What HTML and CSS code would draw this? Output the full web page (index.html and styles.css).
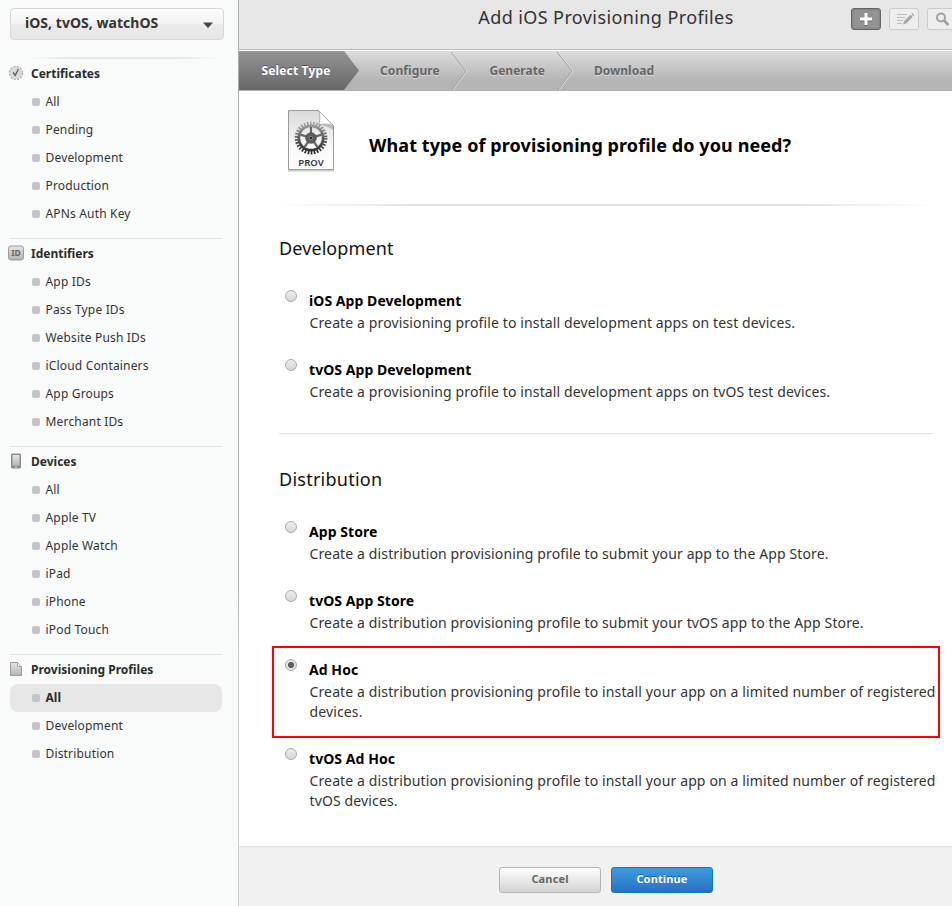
FILE: index.html
```
<!DOCTYPE html>
<html lang="en">
<head>
<meta charset="utf-8">
<title>Add iOS Provisioning Profiles</title>
<link rel="stylesheet" href="styles.css">
</head>
<body>
<aside class="sidebar">
  <div class="platform"><span>iOS, tvOS, watchOS</span><svg width="10" height="6" viewBox="0 0 10 6"><path d="M0 .5h10L5 6z" fill="#444"/></svg></div>
  <div class="fade-rule"></div>
  <nav>
    <section class="group first">
      <h3><svg class="icon" viewBox="0 0 16 16"><circle cx="8" cy="8" r="6.500" fill="#dcdcdc" stroke="#b0b0b0" stroke-width="1.500" stroke-dasharray="2 1.400"/><circle cx="8" cy="8" r="5.800" fill="#dadada"/><path d="M5 7.500l2.200 2.800L10.500 4" fill="none" stroke="#666" stroke-width="1.500"/></svg>Certificates</h3>
      <ul><li>All</li><li>Pending</li><li>Development</li><li>Production</li><li>APNs Auth Key</li></ul>
    </section>
    <section class="group">
      <h3><svg class="icon" viewBox="0 0 16 16"><defs><linearGradient id="g1" x2="0" y2="1"><stop stop-color="#e6e6e6"/><stop offset="1" stop-color="#b4b4b6"/></linearGradient></defs><rect x=".5" y="1" width="15" height="14" rx="2.500" fill="url(#g1)" stroke="#98989b"/><text class="id-label" x="8" y="11.200">ID</text></svg>Identifiers</h3>
      <ul><li>App IDs</li><li>Pass Type IDs</li><li>Website Push IDs</li><li>iCloud Containers</li><li>App Groups</li><li>Merchant IDs</li></ul>
    </section>
    <section class="group">
      <h3><svg class="icon" viewBox="0 0 16 16"><rect x="3" y=".5" width="10" height="15" rx="1.500" fill="#8c8c8f"/><rect x="4.500" y="2" width="7" height="10.700" fill="url(#g1)"/><path d="M7 14.200h2" stroke="#ddd"/></svg>Devices</h3>
      <ul><li>All</li><li>Apple TV</li><li>Apple Watch</li><li>iPad</li><li>iPhone</li><li>iPod Touch</li></ul>
    </section>
    <section class="group">
      <h3><svg class="icon" viewBox="0 0 16 16"><path d="M2.500 1.500h7l4 4v9h-11z" fill="url(#g1)" stroke="#99999c"/><path d="M9.500 1.500v4h4" fill="#f4f4f4" stroke="#99999c" stroke-width=".8"/></svg>Provisioning Profiles</h3>
      <ul><li class="selected">All</li><li>Development</li><li>Distribution</li></ul>
    </section>
  </nav>
</aside>
<main>
  <header class="topbar">
    <h1>Add iOS Provisioning Profiles</h1>
    <div class="tools">
      <button class="tool active" aria-label="Add"><svg width="28" height="20" viewBox="0 0 28 20"><path d="M14 5v12M8 11h12" stroke="#666" stroke-width="3"/><path d="M14 4v12M8 10h12" stroke="#fff" stroke-width="3"/></svg></button>
      <button class="tool" aria-label="Edit"><svg width="28" height="20" viewBox="0 0 28 20"><path d="M7 5.500h10M7 8.500h8M7 11.500h6M7 14.500h5" stroke="#bdbdbd"/><path d="M13 15.500l1-3.300 6.500-6.500 2.200 2.200-6.500 6.500zM21.200 5l1-1 2.200 2.200-1 1z" fill="#a8a8a8"/></svg></button>
      <button class="tool" aria-label="Search"><svg width="28" height="20" viewBox="0 0 28 20"><circle cx="13" cy="8.500" r="4" fill="none" stroke="#a0a0a0" stroke-width="2"/><path d="M16 11.500l4.500 4.500" stroke="#a0a0a0" stroke-width="2.600"/></svg></button>
    </div>
  </header>
  <ol class="steps">
    <li class="current"><svg class="arrow" width="17" height="39" viewBox="0 0 17 39"><defs><linearGradient id="g2" x2="0" y2="1"><stop stop-color="#949494"/><stop offset="1" stop-color="#686868"/></linearGradient></defs><path d="M0 0h1L16 19.500 1 39H0z" fill="url(#g2)"/></svg>Select Type</li>
    <li class="configure">Configure<svg class="arrow" width="17" height="39" viewBox="0 0 17 39"><path d="M0 1l15 19L1 39" fill="none" stroke="#e2e2e2" transform="translate(1)"/><path d="M0 1l15 19L1 39" fill="none" stroke="#a0a0a0"/></svg></li>
    <li class="generate">Generate<svg class="arrow" width="17" height="39" viewBox="0 0 17 39"><path d="M0 1l15 19L1 39" fill="none" stroke="#e2e2e2" transform="translate(1)"/><path d="M0 1l15 19L1 39" fill="none" stroke="#a0a0a0"/></svg></li>
    <li class="download">Download</li>
  </ol>
  <form class="content">
    <div class="intro">
      <svg width="50" height="64" viewBox="0 0 50 64">
        <defs><linearGradient id="g3" x2="0" y2="1"><stop stop-color="#dadada"/><stop offset=".6" stop-color="#f8f8f8"/><stop offset="1" stop-color="#fff"/></linearGradient><linearGradient id="g4" gradientUnits="userSpaceOnUse" x1="0" y1="13" x2="0" y2="46"><stop stop-color="#aaa"/><stop offset=".5" stop-color="#5c5c5c"/><stop offset="1" stop-color="#222"/></linearGradient></defs>
        <path d="M1 61.500h46" stroke="#ccc" stroke-width="2"/>
        <path d="M1.500 1.500h30L46.500 17v43.500h-45z" fill="url(#g3)" stroke="#9a9a9a"/>
        <path d="M31.500 1.500c2 5 1.500 11 0 14.500 5-1.500 11-1 15 1z" fill="#fff" stroke="#aaa"/>
        <path d="M32 16c5-1.500 11-1 14 1v4c-4-3-8-4-14-5z" fill="#bbb"/>
        <circle cx="24" cy="29" r="14.700" fill="none" stroke="url(#g4)" stroke-width="3.400" stroke-dasharray="1.700 1.379"/>
        <circle cx="24" cy="29" r="12.200" fill="none" stroke="url(#g4)" stroke-width="2.800"/>
        <path d="M24 29V18M24 29l10.500-3.400M24 29l6.500 9M24 29l-6.500 9M24 29l-10.500-3.400" stroke="#666" stroke-width="2.200"/>
        <circle cx="24" cy="29" r="5.800" fill="#5c5c5c"/><circle cx="24" cy="29" r="1.700" fill="#222" stroke="#999" stroke-width=".8"/>
        <text class="prov-label" x="24" y="56.500">PROV</text>
      </svg>
      <h2>What type of provisioning profile do you need?</h2>
    </div>
    <section class="kind">
      <h4>Development</h4>
      <label class="option"><input type="radio" name="type"><b>iOS App Development</b><span>Create a provisioning profile to install development apps on test devices.</span></label>
      <label class="option"><input type="radio" name="type"><b>tvOS App Development</b><span>Create a provisioning profile to install development apps on tvOS test devices.</span></label>
    </section>
    <section class="kind distribution">
      <h4>Distribution</h4>
      <label class="option"><input type="radio" name="type"><b>App Store</b><span>Create a distribution provisioning profile to submit your app to the App Store.</span></label>
      <label class="option"><input type="radio" name="type"><b>tvOS App Store</b><span>Create a distribution provisioning profile to submit your tvOS app to the App Store.</span></label>
      <label class="option marked"><input type="radio" name="type" checked><b>Ad Hoc</b><span>Create a distribution provisioning profile to install your app on a limited number of registered devices.</span></label>
      <label class="option"><input type="radio" name="type"><b>tvOS Ad Hoc</b><span>Create a distribution provisioning profile to install your app on a limited number of registered tvOS devices.</span></label>
    </section>
  </form>
  <footer><button class="btn">Cancel</button><button class="btn primary">Continue</button></footer>
</main>
</body>
</html>
```
FILE: styles.css
```
*, *::before { box-sizing: border-box; }
body { margin: 0; width: 952px; height: 906px; overflow: hidden; display: flex; background: #fff; font: 14px "Noto Sans", sans-serif; color: #333; }
h1, h2, h3, h4, ul, ol { margin: 0; padding: 0; list-style: none; font-weight: 400; }
button { font-family: inherit; padding: 0; }

.sidebar { flex: none; width: 239px; padding: 8px 16px 0 10px; background: #f9fbfa; border-right: 1px solid; border-image: linear-gradient(#aaa 65%, #d0d0d0 72%) 1; }
.platform { width: 214px; height: 32px; display: flex; align-items: center; justify-content: space-between; padding: 0 10px 3px 14px; border: 1px solid #d6d6d6; border-radius: 4px; background: linear-gradient(#fcfcfc, #f3f3f3 50%, #ebebeb 50%, #e6e6e6); font-size: 14px; font-weight: 700; letter-spacing: .04px; }
.platform svg { margin-top: 4px; }
.fade-rule { height: 2px; margin: 17px 0 0 20px; width: 190px; background: linear-gradient(90deg, transparent, #e6e8e7 20%, #e6e8e7 80%, transparent); }
.group { width: 212px; border-top: 1px solid #e2e4e3; padding: 1px 0 10px; }
.group.first { border-top: 0; padding-top: 1px; }
.group h3 { height: 28px; display: flex; align-items: center; margin-left: -2px; padding-bottom: 2px; font-size: 12px; font-weight: 700; color: #2b2b2b; }
.icon { width: 16px; height: 16px; margin-right: 7px; }
.id-label { font: 700 8.500px "Noto Sans", sans-serif; fill: #666; text-anchor: middle; }
.group li { height: 28px; display: flex; align-items: center; padding: 0 0 2px 22px; font-size: 12px; letter-spacing: .17px; border-radius: 8px; }
.group li::before { content: ""; width: 8px; height: 8px; margin: 1px 5.500px 0 0; border-radius: 2px; background: #c4c4c8; }
.group li.selected { background: #e6e6e6; font-weight: 700; color: #2b2b2b; letter-spacing: 0; }

main { flex: 1; min-width: 0; display: flex; flex-direction: column; overflow: hidden; }
.topbar { height: 51px; flex: none; position: relative; background: #e6e6e6; border-bottom: 1px solid #fff; box-shadow: inset 0 -1px #bdbdbd; }
h1 { width: 734px; padding-top: 5px; line-height: 25px; font-size: 18px; letter-spacing: .4px; text-align: center; }
.tools { position: absolute; left: 612px; top: 8px; display: flex; gap: 8px; }
.tool { flex: none; width: 30px; height: 22px; border: 1px solid #cbcbcb; border-radius: 3px; background: #eee; }
.tool svg { display: block; }
.tool.active { background: #929292; border: 1px solid #646464; box-shadow: inset 0 0 2px #666; }

.steps { height: 40px; flex: none; display: flex; line-height: 39px; background: linear-gradient(#dcdcdc, #b5b5b5 75%); border-bottom: 1px solid #b0b0b0; font-size: 12px; font-weight: 700; color: #666; text-shadow: 0 1px #ddd; }
.steps li { position: relative; }
.steps .arrow { position: absolute; left: 100%; top: 0; }
.steps .current { width: 104px; padding-left: 22.500px; color: #fff; letter-spacing: .15px; text-shadow: 0 -1px #555; background: linear-gradient(#949494, #686868); }
.steps .configure { width: 108px; padding-left: 37px; letter-spacing: .1px; }
.steps .generate { width: 106px; padding-left: 38.500px; }
.steps .download { padding-left: 37px; }

.content { flex: none; height: 755px; padding: 18px 0 0 40px; }
.intro { display: flex; align-items: center; width: 654px; height: 97px; padding: 0 0 31px 8px; gap: 32px; border-bottom: 2px solid; border-image: linear-gradient(90deg, transparent, #e4e4e4 20%, #e4e4e4 80%, transparent) 1; }
.prov-label { font: 600 9.500px "Noto Sans", sans-serif; fill: #333; text-anchor: middle; }
h2 { font-size: 18px; font-weight: 700; letter-spacing: .09px; color: #000; padding-top: 7px; }
.kind { width: 654px; height: 227px; padding-top: 28px; }
.kind + .kind { border-top: 1px solid #e3e3e3; padding-top: 31px; height: auto; }
h4 { font-size: 18px; line-height: 28px; letter-spacing: .1px; color: #111; margin-bottom: 27px; }
.distribution h4 { letter-spacing: .25px; }
.option { position: relative; display: block; width: 662px; padding: 0 0 25px 30.500px; line-height: 20px; }
.option b { display: block; line-height: 24px; margin-left: -.5px; color: #000; letter-spacing: .06px; }
.option span { display: block; letter-spacing: .13px; }
.option input { appearance: none; position: absolute; left: 6px; top: 1px; margin: 0; width: 12px; height: 12px; border: 1px solid #aaa; border-radius: 50%; background: linear-gradient(#eee, #d6d6d6); }
.option input:checked { background: radial-gradient(circle, #606060 0 2.800px, #e5e5e5 3.400px); }
.marked::before { content: ""; position: absolute; left: -7px; top: -12px; width: 668px; height: 92px; border: 2px solid #f00; }

footer { flex: 1; display: flex; gap: 10px; padding: 20px 0 0 260px; background: #f1f1f1; border-top: 1px solid #e2e2e2; }
.btn { width: 102px; height: 26px; padding-bottom: 3px; border: 1px solid #b5b5b5; border-radius: 3px; background: linear-gradient(#fff, #d3d3d3); font-size: 11px; font-weight: 700; letter-spacing: .14px; color: #666; }
.btn.primary { border-color: #0e78b8; background: linear-gradient(#3d9be4, #2772c0); color: #fff; text-shadow: 0 -1px #1d5c9c; }
```
